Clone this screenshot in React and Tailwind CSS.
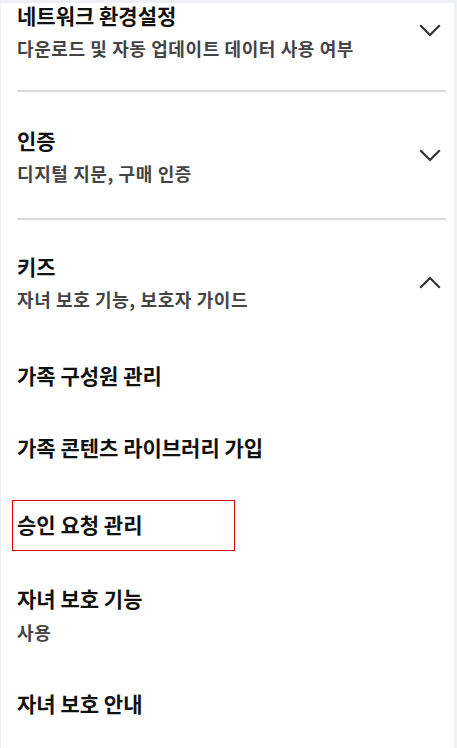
const font = { fontFamily: '"Noto Sans CJK KR", "Noto Sans", sans-serif' };

const Chevron = ({ up }) => (
  <svg width="22" height="14" viewBox="0 0 22 14" fill="none" stroke="#333" strokeWidth="2.2" strokeLinecap="square">
    <path d={up ? 'M2 12 L11 3 L20 12' : 'M2 2 L11 11 L20 2'} />
  </svg>
);

// Collapsible section header with title / subtitle and a chevron
const Section = ({ title, subtitle, open, divider, className = '' }) => (
  <div className={`ml-4 mr-2 flex items-center justify-between ${divider ? 'border-b-2 border-[#dadada]' : ''} ${className}`}>
    <div>
      <h3 className="text-[21px] font-bold leading-[26px] text-[#111]">{title}</h3>
      <p className="mt-[9px] text-[18px] font-bold leading-[22px] tracking-[0.6px] text-[#444]">{subtitle}</p>
    </div>
    <div className="mr-[5px]">
      <Chevron up={open} />
    </div>
  </div>
);

const Item = ({ title, subtitle, boxed, className = '' }) => (
  <div className={`px-4 ${className}`}>
    <div className="relative">
      {boxed && <div className="pointer-events-none absolute -left-[5px] -top-[11px] h-[51px] w-[223px] border border-[#e00000]"></div>}
      <h3 className="text-[21px] font-bold leading-[26px] text-[#111]">{title}</h3>
      {subtitle && <p className="mt-[10px] text-[18px] font-bold leading-[22px] tracking-[0.6px] text-[#444]">{subtitle}</p>}
    </div>
  </div>
);

export default function App() {
  return (
    <div style={font} className="h-[748px] w-[457px] overflow-hidden bg-white">
      <div className="h-full border-t-[3px] border-r-[3px] border-l border-[#eef0f3] bg-white">
        <Section
          title="네트워크 환경설정"
          subtitle="다운로드 및 자동 업데이트 데이터 사용 여부"
          divider
          className="-mt-[1px] pb-[31px]"
        />
        <Section
          title="인증"
          subtitle="디지털 지문, 구매 인증"
          divider
          className="pt-[35px] pb-[34px]"
        />
        <Section
          title="키즈"
          subtitle="자녀 보호 기능, 보호자 가이드"
          open
          className="pt-[33px]"
        />
        <Item title="가족 구성원 관리" className="mt-[52px]" />
        <Item title="가족 콘텐츠 라이브러리 가입" className="mt-[46px]" />
        <Item title="승인 요청 관리" boxed className="mt-[51px]" />
        <Item title="자녀 보호 기능" subtitle="사용" className="mt-[48px]" />
        <Item title="자녀 보호 안내" className="mt-[47px]" />
      </div>
    </div>
  );
}
